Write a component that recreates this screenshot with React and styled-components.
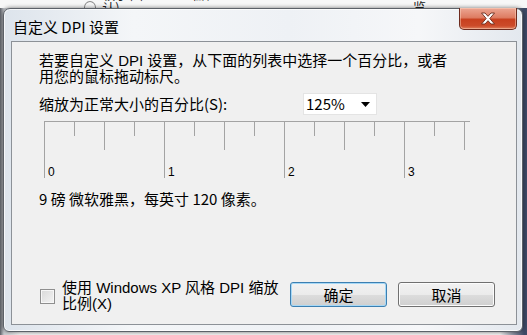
import React from 'react'
import styled, { createGlobalStyle } from 'styled-components'

const GlobalStyle = createGlobalStyle`
  html, body { margin: 0; padding: 0; }
  body {
    background: #f3f3f3;
    font-family: "Noto Sans CJK SC", "Liberation Sans", sans-serif;
  }
`

const UI = `"Noto Sans CJK SC", "Liberation Sans", sans-serif`
const TIGHT = `"Liberation Sans", "Noto Sans CJK SC", sans-serif`

const App = () => {
  const ticks = Array.from({ length: 15 }, (_, i) => i)

  return (
    <Screen>
      <GlobalStyle />
      <BackStrip>
        <BackRadio />
        <BackText>较小(S) - 100% (默认)</BackText>
        <BackPreview>预览</BackPreview>
      </BackStrip>

      <Window>
        <TitleBar>
          <Title>自定义 DPI 设置</Title>
          <CloseButton>
            <svg width="16" height="13" viewBox="0 0 16 13">
              <path
                d="M1.5 1 H5 L8 4.3 L11 1 H14.5 L9.8 6.5 L14.5 12 H11 L8 8.7 L5 12 H1.5 L6.2 6.5 Z"
                fill="#ffffff"
                stroke="#6a2a1c"
                strokeWidth="0.9"
                strokeLinejoin="round"
              />
            </svg>
          </CloseButton>
        </TitleBar>

        <Client>
          <Intro>
            <Line>若要自定义 DPI 设置，从下面的列表中选择一个百分比，或者</Line>
            <Line>用您的鼠标拖动标尺。</Line>
          </Intro>

          <ScaleRow>
            <Label>缩放为正常大小的百分比(S):</Label>
            <Select>
              <span>125%</span>
              <svg width="9" height="5" viewBox="0 0 9 5">
                <path d="M0 0 H9 L4.5 5 Z" fill="#000" />
              </svg>
            </Select>
          </ScaleRow>

          <Ruler width="427" height="58">
            <line x1="0" y1="0.5" x2="426" y2="0.5" stroke="#a3a3a3" />
            {ticks.map((i) => {
              const x = i * 30 + 0.5
              const len = i % 4 === 0 ? 57 : i % 2 === 0 ? 29 : 15
              return <line key={i} x1={x} y1="0" x2={x} y2={len} stroke="#a3a3a3" />
            })}
            {[0, 1, 2, 3].map((n) => (
              <text key={n} x={n * 120 + 4} y="55" fontSize="12" fontFamily="Liberation Sans, sans-serif" fill="#000">
                {n}
              </text>
            ))}
          </Ruler>

          <Info>9 磅 微软雅黑，每英寸 120 像素。</Info>

          <BottomRow>
            <CheckGroup>
              <CheckBox />
              <CheckLabel>
                <Line>使用 Windows XP 风格 DPI 缩放</Line>
                <Line>比例(X)</Line>
              </CheckLabel>
            </CheckGroup>
            <Buttons>
              <Button $primary>确定</Button>
              <Button>取消</Button>
            </Buttons>
          </BottomRow>
        </Client>
      </Window>
    </Screen>
  )
}

export default App

const Screen = styled.div`
  width: 527px;
  height: 335px;
  overflow: hidden;
  display: flex;
  flex-direction: column;
  background: linear-gradient(90deg, #5b5f66 0, #c9ccd1 4px, #f6f6f6 20px, #f6f6f6 500px, #3e4a66 524px);
`

const BackStrip = styled.div`
  height: 8px;
  flex-shrink: 0;
  overflow: hidden;
  display: flex;
  align-items: flex-end;
  padding-left: 84px;
  font: 13px ${UI};
  color: #222;
  background: #f7f7f7;
`

const BackRadio = styled.div`
  width: 11px;
  height: 11px;
  border: 1px solid #8a8a8a;
  border-radius: 50%;
  margin-bottom: -6px;
  margin-right: 6px;
`

const BackText = styled.div`
  line-height: 14px;
  margin-bottom: -7px;
`

const BackPreview = styled.div`
  line-height: 14px;
  margin-bottom: -7px;
  margin-left: 196px;
  padding-right: 90px;
  border-bottom: 1px solid #9a9a9a;
`

const Window = styled.div`
  width: 520px;
  height: 324px;
  margin-left: 3px;
  box-sizing: border-box;
  display: flex;
  flex-direction: column;
  padding: 0 5px 6px 7px;
  border: 1px solid #5c6168;
  border-radius: 7px 7px 6px 6px;
  background: linear-gradient(90deg, #dde4ec 0%, #f4f6f8 25%, #eef1f5 55%, #f6f7f9 80%, #e3e8ee 100%);
  box-shadow: 0 0 4px rgba(0, 0, 0, 0.55), inset 0 0 0 1px rgba(255, 255, 255, 0.7);
`

const TitleBar = styled.div`
  height: 32px;
  flex-shrink: 0;
  display: flex;
  justify-content: space-between;
  align-items: flex-start;
`

const Title = styled.div`
  margin: 9px 0 0 2px;
  font: 15px/17px ${UI};
  color: #000;
`

const CloseButton = styled.div`
  width: 58px;
  height: 22px;
  margin-top: -1px;
  box-sizing: border-box;
  display: flex;
  align-items: center;
  justify-content: center;
  border: 1px solid #6d2b1e;
  border-top: none;
  border-radius: 0 0 5px 5px;
  background: linear-gradient(180deg, #eca693 0%, #de7d63 45%, #c8401f 55%, #cc4b2a 85%, #e0815f 100%);
  box-shadow: inset 0 0 0 1px rgba(255, 220, 200, 0.45);
`

const Client = styled.div`
  flex: 1;
  display: flex;
  flex-direction: column;
  padding: 11px 21px 12px 27px;
  border: 1px solid #8c9197;
  background: #f0f0f0;
  color: #000;
  font: 15px ${UI};
`

const Intro = styled.div`
  display: flex;
  flex-direction: column;
`

const Line = styled.div`
  font-family: ${TIGHT};
  line-height: 16px;
  height: 16px;
  white-space: nowrap;
`

const ScaleRow = styled.div`
  margin-top: 8px;
  display: flex;
  align-items: center;
`

const Label = styled.div`
  width: 264px;
  line-height: 16px;
`

const Select = styled.div`
  width: 74px;
  height: 22px;
  box-sizing: border-box;
  display: flex;
  align-items: center;
  justify-content: space-between;
  padding: 0 6px 0 2px;
  background: #ffffff;
  border: 1px solid #e4e4e4;
  line-height: 16px;
`

const Ruler = styled.svg`
  display: block;
  margin: 6px 0 0 5px;
`

const Info = styled.div`
  margin-top: 12px;
  line-height: 16px;
`

const BottomRow = styled.div`
  margin-top: auto;
  display: flex;
  align-items: flex-start;
  justify-content: space-between;
`

const CheckGroup = styled.div`
  display: flex;
  align-items: flex-start;
  gap: 7px;
`

const CheckBox = styled.div`
  width: 15px;
  height: 15px;
  margin: 7px 0 0 1px;
  box-sizing: border-box;
  border: 1px solid #8f8f8f;
  background: linear-gradient(135deg, #d9d9d9, #f4f4f4);
  box-shadow: inset 0 0 0 1px #f7f7f7;
`

const CheckLabel = styled.div`
  display: flex;
  flex-direction: column;
  margin-top: -2px;
`

const Buttons = styled.div`
  display: flex;
  gap: 11px;
`

const Button = styled.div`
  width: 97px;
  height: 25px;
  box-sizing: border-box;
  display: flex;
  align-items: center;
  justify-content: center;
  border: 1px solid ${(p) => (p.$primary ? '#3c7fb1' : '#707070')};
  border-radius: 3px;
  background: linear-gradient(180deg, #f2f2f2 0%, #ebebeb 50%, #dddddd 51%, #cfcfcf 100%);
  box-shadow: inset 0 0 0 1px ${(p) => (p.$primary ? '#a6d8f6' : '#fcfcfc')};
  font: 15px/16px ${UI};
  color: #000;
`
